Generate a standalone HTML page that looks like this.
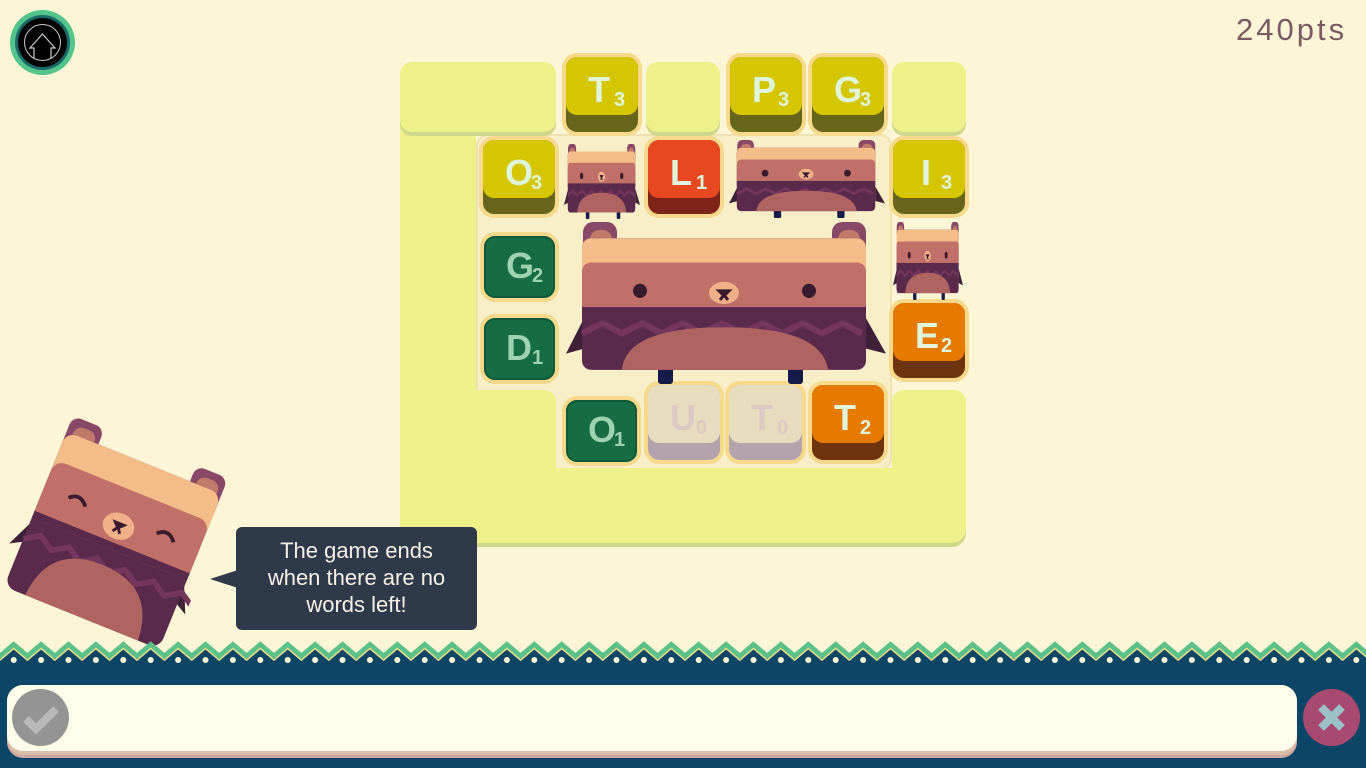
<!DOCTYPE html>
<html><head><meta charset="utf-8"><style>
*{margin:0;padding:0;box-sizing:border-box}
body{width:1366px;height:768px;overflow:hidden;background:#fcf6d6;position:relative;font-family:"Liberation Sans",sans-serif}
.a{position:absolute}
.y{position:absolute;background:#eef089;border-radius:12px;box-shadow:0 4px 0 #cfd88a}
.t{position:absolute;border-radius:11px;box-shadow:0 0 0 4px #f6d98a}
.t .top{position:absolute;left:0;top:0;right:0;border-radius:11px}
.t b{position:absolute;left:22px;top:12px;font:bold 36px "Liberation Sans Narrow","Liberation Sans",sans-serif}
.t i{position:absolute;left:48px;top:32px;font:bold 20px "Liberation Sans Narrow","Liberation Sans",sans-serif;font-style:normal}
</style></head><body>
<!-- board -->
<div class="a" style="left:476px;top:134px;width:416px;height:336px;background:#f8efc8;border-radius:12px;box-shadow:inset 0 0 0 2px #f0e2b0"></div>
<div class="y" style="left:400px;top:62px;width:76px;height:481px;border-radius:14px 0 0 14px"></div>
<div class="y" style="left:400px;top:62px;width:156px;height:70px"></div>
<div class="y" style="left:400px;top:468px;width:566px;height:75px;border-radius:0 0 14px 14px"></div>
<div class="y" style="left:476px;top:390px;width:80px;height:90px;border-radius:0 12px 0 0;box-shadow:none"></div>
<div class="y" style="left:892px;top:390px;width:74px;height:153px;border-radius:12px 12px 14px 0"></div>
<div class="y" style="left:646px;top:62px;width:74px;height:70px"></div>
<div class="y" style="left:892px;top:62px;width:74px;height:70px"></div>

<!-- tiles -->
<div class="t" style="left:566px;top:57px;width:72px;height:75px;background:#66651a"><div class="top" style="height:58px;background:#d6c600"></div><b style="color:#e0f6dc">T</b><i style="color:#e0f6dc">3</i></div>
<div class="t" style="left:730px;top:57px;width:72px;height:75px;background:#66651a"><div class="top" style="height:58px;background:#d6c600"></div><b style="color:#e0f6dc">P</b><i style="color:#e0f6dc">3</i></div>
<div class="t" style="left:812px;top:57px;width:72px;height:75px;background:#66651a"><div class="top" style="height:58px;background:#d6c600"></div><b style="color:#e0f6dc">G</b><i style="color:#e0f6dc">3</i></div>
<div class="t" style="left:483px;top:140px;width:72px;height:74px;background:#66651a"><div class="top" style="height:58px;background:#d6c600"></div><b style="color:#e0f6dc">O</b><i style="color:#e0f6dc">3</i></div>
<div class="t" style="left:648px;top:140px;width:72px;height:74px;background:#7e2418"><div class="top" style="height:58px;background:#e84820"></div><b style="color:#e0f6dc">L</b><i style="color:#e0f6dc">1</i></div>
<div class="t" style="left:893px;top:140px;width:72px;height:74px;background:#66651a"><div class="top" style="height:58px;background:#d6c600"></div><b style="color:#e0f6dc;left:28px">I</b><i style="color:#e0f6dc">3</i></div>
<div class="t" style="left:484px;top:236px;width:71px;height:62px;background:#156c45;box-shadow:0 0 0 4px #f6d98a,inset 0 0 0 2px #0f5a38"><b style="color:#9fd2b0;top:9px">G</b><i style="color:#9fd2b0;top:29px">2</i></div>
<div class="t" style="left:484px;top:318px;width:71px;height:62px;background:#156c45;box-shadow:0 0 0 4px #f6d98a,inset 0 0 0 2px #0f5a38"><b style="color:#9fd2b0;top:9px">D</b><i style="color:#9fd2b0;top:29px">1</i></div>
<div class="t" style="left:566px;top:400px;width:71px;height:62px;background:#156c45;box-shadow:0 0 0 4px #f6d98a,inset 0 0 0 2px #0f5a38"><b style="color:#9fd2b0;top:9px">O</b><i style="color:#9fd2b0;top:29px">1</i></div>
<div class="t" style="left:893px;top:303px;width:72px;height:75px;background:#6e3410"><div class="top" style="height:58px;background:#e67a00"></div><b style="color:#e0f6dc">E</b><i style="color:#e0f6dc">2</i></div>
<div class="t" style="left:812px;top:385px;width:72px;height:75px;background:#6e3410"><div class="top" style="height:58px;background:#e67a00"></div><b style="color:#e0f6dc">T</b><i style="color:#e0f6dc">2</i></div>
<div class="t" style="left:648px;top:385px;width:72px;height:75px;background:#b4a2ac"><div class="top" style="height:58px;background:#e8dcbe"></div><b style="color:#dcc8c4">U</b><i style="color:#dcc8c4">0</i></div>
<div class="t" style="left:729px;top:385px;width:73px;height:75px;background:#b4a2ac"><div class="top" style="height:58px;background:#e8dcbe"></div><b style="color:#dcc8c4">T</b><i style="color:#dcc8c4">0</i></div>

<svg width="0" height="0" style="position:absolute"><defs>
<symbol id="bear" viewBox="0 0 320 160" preserveAspectRatio="none">
<path d="M0 130 L18 95 L18 125Z M320 130 L300 95 L300 125Z" fill="#3e2038"/>
<rect x="92" y="140" width="15" height="20" rx="3" fill="#141a4a"/><rect x="222" y="140" width="15" height="20" rx="3" fill="#141a4a"/>
<rect x="17" y="0" width="34" height="40" rx="10" fill="#8a4868"/><rect x="24" y="8" width="22" height="30" rx="9" fill="#c07a6a"/>
<rect x="266" y="0" width="34" height="40" rx="10" fill="#8a4868"/><rect x="272" y="8" width="22" height="30" rx="9" fill="#c07a6a"/>
<rect x="16" y="16" width="284" height="130" rx="9" fill="#5a2a4c"/>
<rect x="16" y="16" width="284" height="50" rx="9" fill="#f4bc88"/>
<rect x="16" y="40" width="284" height="50" rx="9" fill="#c07068"/>
<rect x="16" y="84" width="284" height="8" fill="#5a2a4c"/>
<path d="M16 110 l20 -10 20 10 20 -10 20 10 20 -10 20 10 20 -10 20 10 20 -10 20 10 20 -10 20 10 20 -10 20 10" stroke="#74365c" stroke-width="6" fill="none"/>
<path d="M56 146 Q60 104 158 104 Q256 104 262 146Z" fill="#b06462"/>
<circle cx="74" cy="68" r="7" fill="#3a1a2e"/><circle cx="243" cy="68" r="7" fill="#3a1a2e"/>
<ellipse cx="158" cy="70" rx="15" ry="11" fill="#f0b088"/><path d="M153 68 h10 l-5 5z M158 72 l-4 5 M158 72 l4 5" stroke="#3a1a2e" stroke-width="3" fill="#3a1a2e"/>
</symbol>
<symbol id="sq" viewBox="0 0 200 200">
<path d="M0 150 L18 110 L18 140Z M200 150 L182 110 L182 140Z" fill="#3e2038"/>
<rect x="12" y="0" width="36" height="40" rx="10" fill="#8a4868"/><rect x="19" y="8" width="24" height="30" rx="9" fill="#c07a6a"/>
<rect x="152" y="0" width="36" height="40" rx="10" fill="#8a4868"/><rect x="159" y="8" width="24" height="30" rx="9" fill="#c07a6a"/>
<rect x="12" y="18" width="176" height="176" rx="12" fill="#5a2a4c"/>
<rect x="12" y="18" width="176" height="70" rx="12" fill="#f4bc88"/>
<rect x="12" y="50" width="176" height="66" rx="12" fill="#c07068"/>
<rect x="12" y="108" width="176" height="8" fill="#5a2a4c"/>
<path d="M12 140 l16 -10 16 10 16 -10 16 10 16 -10 16 10 16 -10 16 10 16 -10 16 10 16 -10 16 10" stroke="#74365c" stroke-width="6" fill="none"/>
<path d="M36 194 Q40 134 100 134 Q160 134 164 194Z" fill="#b06462"/>
<path d="M40 82 q10 -10 20 2 M140 82 q10 -10 20 2" stroke="#3a1a2e" stroke-width="4" fill="none"/>
<ellipse cx="100" cy="90" rx="17" ry="14" fill="#f0b088"/><path d="M95 87 h10 l-5 5z M100 91 l-4 6 M100 91 l4 6" stroke="#3a1a2e" stroke-width="3" fill="#3a1a2e"/>
</symbol></defs></svg>

<svg class="a" style="left:566px;top:222px" width="320" height="162"><use href="#bear"/></svg>
<svg class="a" style="left:564px;top:144px" width="76" height="75"><use href="#bear"/></svg>
<svg class="a" style="left:729px;top:140px" width="156" height="78"><use href="#bear"/></svg>
<svg class="a" style="left:893px;top:222px" width="70" height="78"><use href="#bear"/></svg>
<svg class="a" style="left:20px;top:440px;transform:rotate(22deg)" width="190" height="190"><use href="#sq"/></svg>

<!-- speech bubble -->
<div class="a" style="left:210px;top:570px;width:0;height:0;border-top:9px solid transparent;border-bottom:9px solid transparent;border-right:28px solid #2e3a4a"></div>
<div class="a" style="left:236px;top:527px;width:241px;height:103px;background:#2e3a4a;border-radius:6px;color:#f6f0e6;font-size:22px;line-height:27px;text-align:center;padding:10px 16px 0">The game ends when there are no words left!</div>

<!-- home -->
<div class="a" style="left:10px;top:10px;width:65px;height:65px;border-radius:50%;background:#52c48c"></div>
<div class="a" style="left:15px;top:15px;width:55px;height:55px;border-radius:50%;background:#1a6a6a"></div>
<div class="a" style="left:18px;top:18px;width:49px;height:49px;border-radius:50%;background:#000"></div>
<svg class="a" style="left:18px;top:18px" width="49" height="49"><circle cx="24.5" cy="24.5" r="18" stroke="#ccc" fill="none" stroke-width="1"/><path d="M16 40 V30 L12 30 L24.5 16 L37 30 L33 30 V40" stroke="#ccc" fill="#000" stroke-width="1.2"/></svg>

<div class="a" style="left:1236px;top:12px;font-size:31px;color:#7a5a64;letter-spacing:3px">240pts</div>

<!-- bottom -->
<div class="a" style="left:0;top:656px;width:1366px;height:112px;background:#0d4566"></div>
<svg class="a" style="left:0;top:640px" width="1366" height="30">
<defs><pattern id="zz" width="27.4" height="30" patternUnits="userSpaceOnUse">
<path d="M0 16 L13.7 4 L27.4 16 V30 H0Z" fill="#0d4566"/>
<path d="M-1 17 L13.7 4.5 L28.4 17" stroke="#5cc08a" stroke-width="5" fill="none"/>
<path d="M-1 21 L13.7 8.5 L28.4 21" stroke="#e8e08a" stroke-width="1.5" fill="none"/>
<circle cx="13.7" cy="20" r="3" fill="#fcf6d6"/>
</pattern></defs>
<rect width="1366" height="30" fill="url(#zz)"/></svg>
<div class="a" style="left:7px;top:685px;width:1290px;height:73px;border-radius:16px;background:#c8a8a0"></div>
<div class="a" style="left:7px;top:685px;width:1290px;height:66px;border-radius:16px;background:#fefeea;box-shadow:0 4px 0 #dcbcaa"></div>
<div class="a" style="left:12px;top:689px;width:57px;height:57px;border-radius:50%;background:#949494"></div>
<svg class="a" style="left:12px;top:689px" width="57" height="57"><path d="M14 30 L24 40 L44 20" stroke="#b8b8b8" stroke-width="8" fill="none"/></svg>
<div class="a" style="left:1303px;top:689px;width:57px;height:57px;border-radius:50%;background:#a84a70"></div>
<svg class="a" style="left:1303px;top:689px" width="57" height="57"><path d="M18 18 L39 39 M39 18 L18 39" stroke="#9cc0c8" stroke-width="8"/></svg>
</body></html>
